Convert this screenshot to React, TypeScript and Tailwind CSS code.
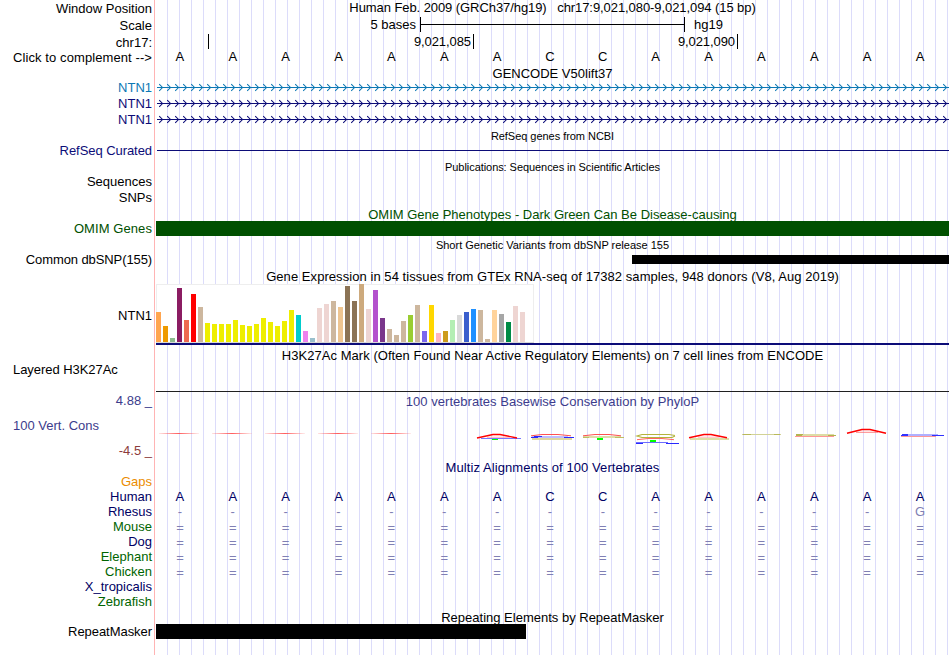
import clsx from "clsx";

const BAR_COLORS: [string, number][] = [
  ["#FFA54F", 30], ["#EE9A00", 16], ["#8FBC8F", 4], ["#8B1C62", 54], ["#EE6A50", 22], ["#FF0000", 48],
  ["#CDB79E", 35], ["#EEEE00", 19], ["#EEEE00", 18], ["#EEEE00", 18], ["#EEEE00", 18], ["#EEEE00", 22],
  ["#EEEE00", 17], ["#EEEE00", 16], ["#EEEE00", 18], ["#EEEE00", 24], ["#EEEE00", 20], ["#EEEE00", 16],
  ["#EEEE00", 21], ["#EEEE00", 32], ["#00CDCD", 27], ["#EE82EE", 11], ["#9AC0CD", 4], ["#EED5D2", 34],
  ["#EED5D2", 38], ["#CDB79E", 41], ["#EEC591", 35], ["#8B7355", 56], ["#8B7355", 41], ["#CDAA7D", 58],
  ["#EED5D2", 33], ["#B452CD", 52], ["#7A378B", 24], ["#CDB79E", 13], ["#CDB79E", 7], ["#CDB79E", 21],
  ["#9ACD32", 27], ["#CDB79E", 37], ["#7A67EE", 11], ["#FFD700", 37], ["#FFB6C1", 9], ["#CD9B1D", 11],
  ["#B4EEB4", 22], ["#D9D9D9", 27], ["#3A5FCD", 30], ["#1E90FF", 33], ["#CDB79E", 32], ["#CDB79E", 3],
  ["#FFD39B", 32], ["#A6A6A6", 28], ["#008B45", 20], ["#EED5D2", 36], ["#EED5D2", 30],
];

const BASES = "AAAAAAACCAAAAAA".split("");
const NAVY = "text-[#000064]";
const GREEN = "text-[#006400]";

interface LabelProps {
  text: string;
  className: string;
}

function Label({ text, className }: LabelProps) {
  return <div className={clsx("shrink-0 whitespace-pre pr-0.5 text-right", className)}>{text}</div>;
}

function Title({ text, className }: LabelProps) {
  return <div className={clsx("shrink-0 whitespace-pre text-center", className)}>{text}</div>;
}

function BaseRow({ bases, className }: { bases: string[]; className: string }) {
  return (
    <div className={clsx("-ml-[2.5px] mr-[2.5px] flex shrink-0", className)}>
      {bases.map((b, i) => (
        <span key={i} className="flex-1 text-center">{b}</span>
      ))}
    </div>
  );
}

// transcript line with strand arrows every 8px
function Transcript({ color }: { color: string }) {
  const arrows = Array.from({ length: 99 }, (_, i) => `M${3.2 + i * 8} 4.2l3.3 3.3l-3.3 3.3`).join("");
  return (
    <svg width="793" height="16" className="block shrink-0" fill="none" stroke={color}>
      <path d="M1 7.5H793" />
      <path d={arrows} strokeWidth="1.05" />
    </svg>
  );
}

function ExpressionChart() {
  return (
    <svg width="793" height="63" className="block shrink-0" shapeRendering="crispEdges">
      <rect x="0.5" y="0.5" width="377" height="58" fill="white" stroke="#eeeeee" />
      <path d="M0 58.5H378" stroke="#d8d8d8" />
      {BAR_COLORS.map(([color, h], i) => (
        <rect key={i} x={i * 7} y={58 - h} width="5" height={h} fill={color} />
      ))}
      <rect y="59" width="793" height="2" fill="#0c0c78" />
    </svg>
  );
}

// sequence logo squashed to the score of each base
function Conservation() {
  return (
    <svg width="793" height="49" className="block shrink-0" fill="none">
      <defs>
        <linearGradient id="fade">
          <stop offset="0" stopColor="#ff4040" stopOpacity="0.15" />
          <stop offset="0.5" stopColor="#ff4040" stopOpacity="0.85" />
          <stop offset="1" stopColor="#ff4040" stopOpacity="0.1" />
        </linearGradient>
      </defs>
      {[3, 56, 109, 162, 215].map((x) => (
        <rect key={x} x={x} y="23" width="40" height="1" fill="url(#fade)" />
      ))}

      <path d="M325 28.5H365" stroke="#7878ff" />
      <path d="M331 27.3H354" stroke="#ffa0a0" strokeWidth="0.8" />
      <path d="M321 28L337 24.5H344L361 28" stroke="#ff0000" strokeWidth="1.4" />
      <rect x="336" y="29" width="6" height="1" fill="#00ff00" />

      <rect x="376" y="28" width="40" height="2" fill="#ded7a0" />
      <rect x="376" y="26" width="36" height="2" fill="#bebeff" />
      <path d="M375 27.5H382M378 26.5H386M408 27.5H418" stroke="#2828ff" />
      <path d="M375 25.8L386 24.5H402L415 25.8" stroke="#ff5050" />

      <rect x="427" y="26" width="38" height="2" fill="#dedea8" />
      <path d="M427 27.5H433M459 27.5H468" stroke="#bebe64" />
      <path d="M427 25.8L439 24.5H453L465 25.8" stroke="#ff5050" />
      <rect x="441" y="28" width="6" height="2" fill="#00ff00" />

      <path d="M519 25.5L513 24.5H486L481 26L486 27.5H516L519 26" stroke="#b4b43c" strokeWidth="1.2" />
      <path d="M481 29.7L492 28.5H506L518 29.7" stroke="#ff6464" />
      <rect x="494" y="30" width="6" height="2" fill="#00ff00" />
      <path d="M480 32.5H512" stroke="#6e6eff" />
      <path d="M480 33.5H487M510 33.5H523" stroke="#2828ff" />

      <path d="M534 29H573" stroke="#dedea5" strokeWidth="2" />
      <path d="M542 27.2H563" stroke="#ffa0a0" strokeWidth="0.8" />
      <path d="M533 27.8L548 24.5H555L571 27.8" stroke="#ff0000" strokeWidth="1.4" />

      <path d="M586 24.5H625" stroke="#d2d296" />
      <path d="M587 24.5H595M618 24.5H624" stroke="#b9b95a" />

      <rect x="640" y="24" width="38" height="2" fill="#dcdca5" />
      <path d="M640 24.5H647M640 25.5H646M672 25.5H680" stroke="#b4b450" />
      <path d="M639 26.5H678" stroke="#ff9696" />

      <path d="M700 22.3H722" stroke="#ff6464" strokeWidth="0.8" />
      <path d="M691 23.3L706 19.5H714L730 23.3" stroke="#ff0000" strokeWidth="1.5" />

      <rect x="746" y="24" width="36" height="2" fill="#b0b0ff" />
      <path d="M746 24.5H752M745 25.5H752M776 25.5H788" stroke="#3232ff" />
      <path d="M745 26.5H780" stroke="#ff9696" />
    </svg>
  );
}

export default function App() {
  return (
    <main className="flex h-[655px] w-[950px] overflow-hidden bg-white font-['Liberation_Sans',Arial,sans-serif] text-[13px] text-black">
      <div className="flex w-[154px] shrink-0 flex-col">
        <Label text="Window Position" className="h-[17px] leading-[17px]" />
        <Label text="Scale" className="h-[17px] leading-[17px]" />
        <Label text="chr17:" className="h-[17px] leading-[17px]" />
        <Label text="Click to complement -->" className="mb-4 h-[13px] leading-[13px] tracking-[0.09px]" />
        <Label text="NTN1" className="h-4 leading-4 text-[#0c78b4]" />
        <Label text="NTN1" className="h-4 leading-4 text-[#0c0c78]" />
        <Label text="NTN1" className="mb-[15px] h-4 leading-4 text-[#0c0c78]" />
        <Label text="RefSeq Curated" className="mb-[15px] h-4 leading-4 tracking-[-0.06px] text-[#0c0c78]" />
        <Label text="Sequences" className="h-4 leading-4" />
        <Label text="SNPs" className="mb-[15px] h-4 leading-4" />
        <Label text="OMIM Genes" className="mb-4 h-[15px] leading-[15px] tracking-[0.08px] text-[#005000]" />
        <Label text="Common dbSNP(155)" className="mb-4 h-4 leading-4 tracking-[-0.1px]" />
        <Label text="NTN1" className="mb-[15px] h-[63px] leading-[63px]" />
        <div className="mb-4 h-[15px] pl-[13px] leading-[15px] tracking-[-0.05px]">Layered H3K27Ac</div>
        <Label text="4.88 _" className="mb-2.5 h-[15px] leading-[15px] text-[#3c3c8c]" />
        <div className="mb-2.5 h-[15px] pl-[13px] leading-[15px] text-[#3c3c8c]">100 Vert. Cons</div>
        <Label text="-4.5 _" className="mb-4 h-[15px] leading-[15px] text-[#8c3c3c]" />
        <Label text="Gaps" className="h-[15px] leading-[15px] text-[#eb8c00]" />
        <Label text="Human" className={clsx("h-[15px] leading-[15px]", NAVY)} />
        <Label text="Rhesus" className={clsx("h-[15px] leading-[15px]", NAVY)} />
        <Label text="Mouse" className={clsx("h-[15px] leading-[15px]", GREEN)} />
        <Label text="Dog" className={clsx("h-[15px] leading-[15px]", NAVY)} />
        <Label text="Elephant" className={clsx("h-[15px] leading-[15px]", GREEN)} />
        <Label text="Chicken" className={clsx("h-[15px] leading-[15px]", GREEN)} />
        <Label text="X_tropicalis" className={clsx("h-[15px] leading-[15px]", NAVY)} />
        <Label text="Zebrafish" className={clsx("mb-[15px] h-[15px] leading-[15px]", GREEN)} />
        <Label text="RepeatMasker" className="h-[15px] leading-[15px] tracking-[-0.05px]" />
      </div>

      <div className="w-[795px] shrink-0 border-l border-[#ffb4b4] pl-px">
        <div className="flex h-full w-[793px] flex-col bg-[repeating-linear-gradient(to_right,transparent_0px,transparent_11px,#dcdcfa_11px,#dcdcfa_12px)]">
          <Title text="Human Feb. 2009 (GRCh37/hg19)   chr17:9,021,080-9,021,094 (15 bp)" className="h-[15px] leading-[15px] tracking-[-0.075px]" />
          <div className="flex h-[19px] shrink-0 leading-[19px]">
            <span className="w-[264px] pr-1 text-right">5 bases</span>
            <div className="mt-0.5 flex h-[15px] w-[265px] items-center border-x border-black">
              <div className="h-px w-full bg-black" />
            </div>
            <span className="pl-[9px]">hg19</span>
          </div>
          <div className="flex h-4 shrink-0 leading-4">
            <span className="h-[15px] w-[53px] border-r border-black" />
            <span className="h-[15px] w-[265px] border-r border-black pr-0.5 text-right tracking-[-0.08px]">9,021,085</span>
            <span className="h-[15px] w-[264px] border-r border-black pr-0.5 text-right tracking-[-0.08px]">9,021,090</span>
          </div>
          <BaseRow bases={BASES} className="mb-[3px] h-[13px] leading-[13px]" />
          <Title text="GENCODE V50lift37" className="h-[14px] leading-[15px]" />
          <Transcript color="#0c78b4" />
          <Transcript color="#0c0c78" />
          <Transcript color="#0c0c78" />
          <Title text="RefSeq genes from NCBI" className="h-[15px] text-[11px] leading-4 tracking-[-0.04px]" />
          <div className="flex h-4 shrink-0 pl-px pt-[7px]">
            <div className="h-px w-full bg-[#0c0c78]" />
          </div>
          <Title text="Publications: Sequences in Scientific Articles" className="mb-8 h-[15px] text-[11px] leading-4 tracking-[-0.06px]" />
          <Title text="OMIM Gene Phenotypes - Dark Green Can Be Disease-causing" className="h-[15px] leading-[17px] text-[#005000]" />
          <div className="h-[15px] shrink-0 bg-[#005000]" />
          <Title text="Short Genetic Variants from dbSNP release 155" className="h-4 text-[11px] leading-[19px]" />
          <div className="flex h-4 shrink-0 justify-end pt-[3px]">
            <div className="h-[9px] w-[317px] bg-black" />
          </div>
          <Title text="Gene Expression in 54 tissues from GTEx RNA-seq of 17382 samples, 948 donors (V8, Aug 2019)" className="h-4 leading-[17px] tracking-[0.06px]" />
          <ExpressionChart />
          <Title text="H3K27Ac Mark (Often Found Near Active Regulatory Elements) on 7 cell lines from ENCODE" className="h-4 leading-[17px] tracking-[0.045px]" />
          <div className="mb-px h-[29px] shrink-0 border-b border-[#202020]" />
          <Title text="100 vertebrates Basewise Conservation by PhyloP" className="h-[17px] leading-[17px] tracking-[0.03px] text-[#3c3c8c]" />
          <Conservation />
          <Title text="Multiz Alignments of 100 Vertebrates" className={clsx("mb-[14px] h-4 leading-[17px] tracking-[0.08px]", NAVY)} />
          <BaseRow bases={BASES} className={clsx("h-[15px] leading-[15px]", NAVY)} />
          <BaseRow bases={[..."-".repeat(14), "G"]} className="h-[15px] leading-[15px] text-[#8080b4]" />
          {["Mouse", "Dog", "Elephant", "Chicken"].map((species) => (
            <BaseRow key={species} bases={[..."=".repeat(15)]} className="h-[15px] leading-[17px] text-[#8080b4]" />
          ))}
          <Title text="Repeating Elements by RepeatMasker" className="mt-[30px] h-[15px] leading-[17px]" />
          <div className="h-[15px] w-[370px] shrink-0 bg-black" />
        </div>
      </div>
    </main>
  );
}
